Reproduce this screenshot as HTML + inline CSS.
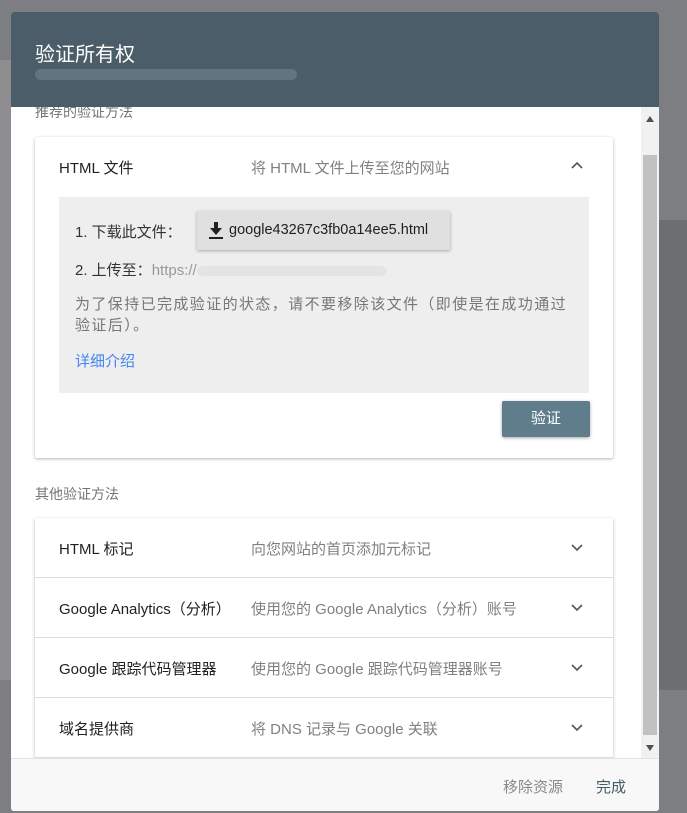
<!DOCTYPE html>
<html><head><meta charset="utf-8"><style>
*{margin:0;padding:0;box-sizing:border-box}
body{width:687px;height:813px;overflow:hidden;background:#7d7e82;font-family:"Liberation Sans","Noto Sans CJK SC",sans-serif;position:relative}
.bgl{position:absolute;left:0;top:60px;width:11px;height:620px;background:#8e8e90}
.bgr{position:absolute;left:659px;top:220px;width:28px;height:470px;background:#6b6f72}
.dlg{position:absolute;left:11px;top:12px;width:648px;height:799px;background:#fff;border-radius:3px;overflow:hidden}
.hd{position:absolute;left:0;top:0;width:648px;height:95px;background:#4a5d69;z-index:2}
.hd h1{position:absolute;left:24px;top:26px;font-size:20px;font-weight:normal;color:#fff}
.hd .u{position:absolute;left:24px;top:57px;width:262px;height:11px;background:#65777f;border-radius:6px;opacity:.9}
.sec{position:absolute;left:24px;font-size:14px;color:#757575}
.card{position:absolute;left:24px;width:578px;background:#fff;box-shadow:0 1px 3px rgba(0,0,0,.3);border-radius:2px}
.row{position:relative;height:60px;border-bottom:1px solid #ddd;font-size:15px}
.row .a{position:absolute;left:24px;top:20px;color:#212121}
.row .b{position:absolute;left:216px;top:20px;color:#808080}
.chev{position:absolute;left:536px;top:24px}
.gray{position:absolute;left:24px;top:60px;width:530px;height:196px;background:#eeeeee;font-size:15px;color:#333}
.btn{position:absolute;left:467px;top:264px;width:88px;height:36px;background:#607d8b;color:#fff;font-size:15px;text-align:center;line-height:36px;border-radius:2px;box-shadow:0 1px 3px rgba(0,0,0,.35)}
.dl{position:absolute;left:138px;top:14px;width:253px;height:39px;background:#e0e0e0;border-radius:2px;box-shadow:0 1px 3px rgba(0,0,0,.3);font-size:14.5px;color:#212121;line-height:39px;padding-left:32px}
.sb{position:absolute;left:630px;top:95px;width:18px;height:651px;background:#f1f1f1}
.th{position:absolute;left:2px;top:48px;width:14px;height:580px;background:#c1c1c1}
.ft{position:absolute;left:0;top:746px;width:648px;height:53px;background:#f8f8f8;border-top:1px solid #e3e3e3;z-index:3;font-size:15px}
</style></head><body>
<div class="bgl"></div><div class="bgr"></div>
<div class="dlg">
 <div class="hd"><h1>验证所有权</h1><div class="u"></div></div>
 <div class="sec" style="top:90px">推荐的验证方法</div>
 <div class="card" style="top:125px;height:321px">
  <div class="row" style="border:none"><span class="a">HTML 文件</span><span class="b">将 HTML 文件上传至您的网站</span>
   <svg class="chev" width="12" height="10" viewBox="0 0 12 10"><path d="M1 7 L6 2 L11 7" fill="none" stroke="#555" stroke-width="1.6"/></svg></div>
  <div class="gray">
   <div style="position:absolute;left:16px;top:24px">1. 下载此文件：</div>
   <div class="dl"><svg style="position:absolute;left:12px;top:11px" width="14" height="17" viewBox="0 0 14 17"><path d="M5 0h4v6h4l-6 7-6-7h4z" fill="#212121"/><rect x="0" y="15" width="14" height="2" fill="#212121"/></svg>google43267c3fb0a14ee5.html</div>
   <div style="position:absolute;left:16px;top:62px">2. 上传至：<span style="color:#999">https://</span><span style="display:inline-block;width:190px;height:10px;background:#e4e4e4;border-radius:5px;vertical-align:middle"></span></div>
   <div style="position:absolute;left:16px;top:97px;width:505px;line-height:21px;color:#777;letter-spacing:1.4px">为了保持已完成验证的状态，请不要移除该文件（即使是在成功通过验证后）。</div>
   <div style="position:absolute;left:16px;top:153px;color:#4285f4">详细介绍</div>
  </div>
  <div class="btn">验证</div>
 </div>
 <div class="sec" style="top:472px">其他验证方法</div>
 <div class="card" style="top:506px;height:260px">
  <div class="row"><span class="a">HTML 标记</span><span class="b">向您网站的首页添加元标记</span><svg class="chev" width="12" height="10" viewBox="0 0 12 10"><path d="M1 3 L6 8 L11 3" fill="none" stroke="#555" stroke-width="1.6"/></svg></div>
  <div class="row"><span class="a">Google Analytics（分析）</span><span class="b">使用您的 Google Analytics（分析）账号</span><svg class="chev" width="12" height="10" viewBox="0 0 12 10"><path d="M1 3 L6 8 L11 3" fill="none" stroke="#555" stroke-width="1.6"/></svg></div>
  <div class="row"><span class="a">Google 跟踪代码管理器</span><span class="b">使用您的 Google 跟踪代码管理器账号</span><svg class="chev" width="12" height="10" viewBox="0 0 12 10"><path d="M1 3 L6 8 L11 3" fill="none" stroke="#555" stroke-width="1.6"/></svg></div>
  <div class="row"><span class="a">域名提供商</span><span class="b">将 DNS 记录与 Google 关联</span><svg class="chev" width="12" height="10" viewBox="0 0 12 10"><path d="M1 3 L6 8 L11 3" fill="none" stroke="#555" stroke-width="1.6"/></svg></div>
 </div>
 <div class="sb"><div class="th"></div>
  <svg style="position:absolute;left:5px;top:9px" width="8" height="6"><path d="M0 6L4 0L8 6z" fill="#505050"/></svg>
  <svg style="position:absolute;left:5px;top:638px" width="8" height="6"><path d="M0 0L4 6L8 0z" fill="#505050"/></svg></div>
 <div class="ft"><span style="position:absolute;left:492px;top:17px;color:#888">移除资源</span><span style="position:absolute;left:585px;top:17px;color:#455a64">完成</span></div>
</div>
</body></html>
